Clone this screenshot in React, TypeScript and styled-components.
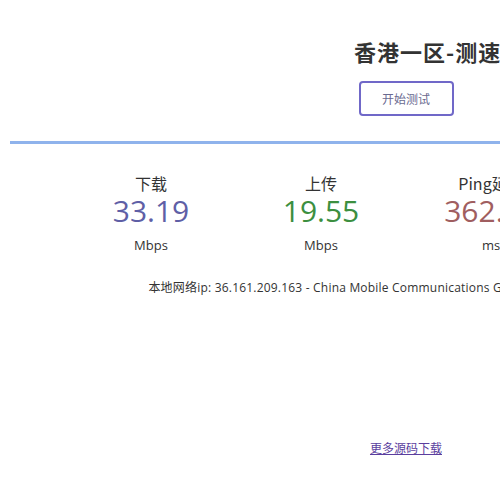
import React from "react";
import styled, { createGlobalStyle } from "styled-components";

const GlobalStyle = createGlobalStyle`
  html, body {
    margin: 0;
    padding: 0;
    background: #ffffff;
    overflow: hidden;
  }
  body {
    font-family: "Open Sans", "Noto Sans CJK SC", sans-serif;
    color: #333333;
  }
`;

const Page = styled.div`
  width: 812px;
  display: flex;
  flex-direction: column;
  align-items: center;
  padding-top: 37px;
`;

const TitleRow = styled.div`
  align-self: stretch;
  padding-left: 354px;
`;

const Title = styled.h1`
  margin: 0;
  font-family: "Noto Sans CJK SC", sans-serif;
  font-size: 22px;
  line-height: 28px;
  font-weight: 700;
  letter-spacing: 1px;
  color: #333333;
  white-space: nowrap;
`;

const StartButton = styled.button`
  margin-top: 16px;
  width: 95px;
  height: 35px;
  border: 2px solid #7068c8;
  border-radius: 4px;
  background: #ffffff;
  color: #6a6a90;
  font-family: "Noto Sans CJK SC", sans-serif;
  font-size: 12px;
  cursor: pointer;
`;

const Progress = styled.div`
  align-self: stretch;
  margin: 25px 10px 0;
  height: 3px;
  background: #8fb3ec;
`;

const Meters = styled.div`
  display: flex;
  justify-content: center;
  margin-top: 28px;
`;

const Meter = styled.div`
  width: 170px;
  display: flex;
  flex-direction: column;
  align-items: center;
`;

const MeterLabel = styled.div`
  font-family: "Noto Sans CJK SC", sans-serif;
  font-size: 16px;
  line-height: 22px;
  color: #333333;
`;

const MeterValue = styled.div<{ $color: string }>`
  font-family: "Open Sans", sans-serif;
  font-size: 30px;
  line-height: 34px;
  color: ${(p) => p.$color};
`;

const MeterUnit = styled.div`
  margin-top: 8px;
  font-family: "Open Sans", sans-serif;
  font-size: 13px;
  line-height: 18px;
  color: #333333;
`;

const IpInfo = styled.div`
  margin-top: 25px;
  font-size: 12px;
  line-height: 18px;
  letter-spacing: 0.2px;
  color: #333333;
  white-space: nowrap;
`;

const SourceLink = styled.a`
  margin-top: 142px;
  font-family: "Noto Sans CJK SC", sans-serif;
  font-size: 12px;
  line-height: 18px;
  color: #5b3e9e;
  text-decoration: underline;
`;

const meters = [
  { label: "下载", value: "33.19", unit: "Mbps", color: "#5f5fa6" },
  { label: "上传", value: "19.55", unit: "Mbps", color: "#3c8f40" },
  { label: "Ping延迟", value: "362.45", unit: "ms", color: "#a05e60" },
  { label: "抖动", value: "24.61", unit: "ms", color: "#a05e60" },
];

export default function App() {
  return (
    <>
      <GlobalStyle />
      <Page>
        <TitleRow>
          <Title>香港一区-测速</Title>
        </TitleRow>
        <StartButton>开始测试</StartButton>
        <Progress />
        <Meters>
          {meters.map((m) => (
            <Meter key={m.label}>
              <MeterLabel>{m.label}</MeterLabel>
              <MeterValue $color={m.color}>{m.value}</MeterValue>
              <MeterUnit>{m.unit}</MeterUnit>
            </Meter>
          ))}
        </Meters>
        <IpInfo>
          本地网络ip: 36.161.209.163 - China Mobile Communications Group Co., Ltd., CN (1234 km)
        </IpInfo>
        <SourceLink href="#">更多源码下载</SourceLink>
      </Page>
    </>
  );
}
